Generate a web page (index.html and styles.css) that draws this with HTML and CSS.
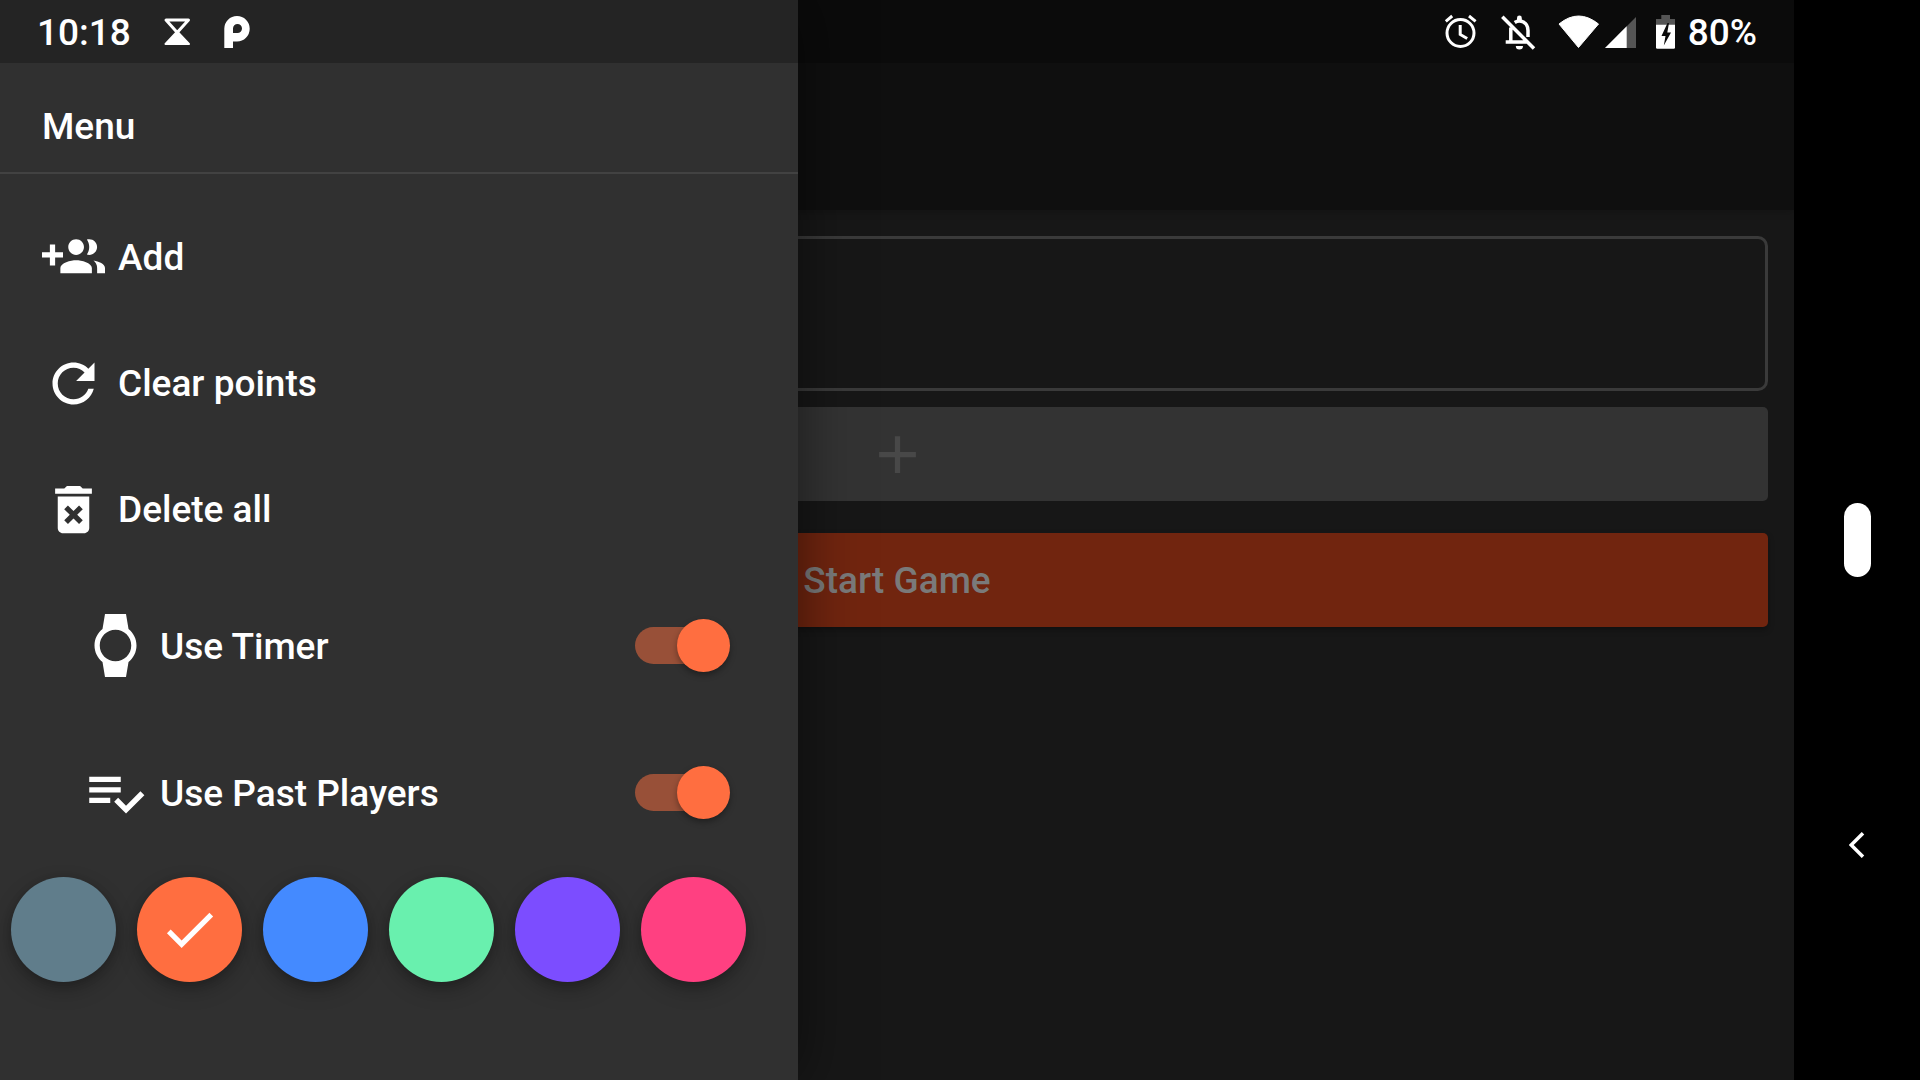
FILE: index.html
```html
<!DOCTYPE html>
<html lang="en">
<head>
<meta charset="utf-8">
<meta name="viewport" content="width=device-width, initial-scale=1">
<title>Menu</title>
<link rel="stylesheet" href="styles.css">
</head>
<body>
<div class="device">
  <div class="screen">
    <div class="game">
      <header class="app-bar"></header>
      <main class="setup">
        <section class="players" aria-label="Players"></section>
        <button class="bar-button add-player" type="button" aria-label="Add player">
          <svg class="icon" viewBox="0 0 24 24"><path d="M19 13h-6v6h-2v-6H5v-2h6V5h2v6h6v2z"/></svg>
        </button>
        <button class="bar-button start-game" type="button"><span class="label">Start Game</span></button>
      </main>
    </div>

    <aside class="drawer">
      <h1 class="drawer-title">Menu</h1>
      <nav class="actions">
        <button class="action" type="button">
          <svg class="icon" viewBox="0 0 24 24"><path d="M8 10H5V7H3v3H0v2h3v3h2v-3h3v-2zm10 1c1.66 0 2.99-1.34 2.99-3S19.66 5 18 5c-.32 0-.63.05-.91.14.57.81.9 1.79.9 2.86s-.34 2.04-.9 2.86c.28.09.59.14.91.14zm-5 0c1.66 0 2.99-1.34 2.99-3S14.66 5 13 5c-1.66 0-3 1.34-3 3s1.34 3 3 3zm6.62 2.16c.83.73 1.38 1.66 1.38 2.84v2h3v-2c0-1.54-2.37-2.49-4.38-2.84zM13 13c-2 0-6 1-6 3v2h12v-2c0-2-4-3-6-3z"/></svg>
          <span class="label">Add</span>
        </button>
        <button class="action" type="button">
          <svg class="icon" viewBox="0 0 24 24"><path d="M17.65 6.35C16.2 4.9 14.21 4 12 4c-4.42 0-7.99 3.58-7.99 8s3.57 8 7.99 8c3.73 0 6.84-2.55 7.73-6h-2.08c-.82 2.33-3.04 4-5.65 4-3.31 0-6-2.69-6-6s2.69-6 6-6c1.66 0 3.14.69 4.22 1.78L13 11h7V4l-2.35 2.35z"/></svg>
          <span class="label">Clear points</span>
        </button>
        <button class="action" type="button">
          <svg class="icon" viewBox="0 0 24 24"><path d="M6 19c0 1.1.9 2 2 2h8c1.1 0 2-.9 2-2V7H6v12zm2.46-7.12l1.41-1.41L12 12.59l2.12-2.12 1.41 1.41L13.41 14l2.12 2.12-1.41 1.41L12 15.41l-2.12 2.12-1.41-1.41L10.59 14l-2.13-2.12zM15.5 4l-1-1h-5l-1 1H5v2h14V4z"/></svg>
          <span class="label">Delete all</span>
        </button>
      </nav>
      <label class="setting">
        <svg class="icon" viewBox="0 0 24 24"><path d="M20 12c0-2.54-1.19-4.81-3.04-6.27L16 0H8l-.95 5.73C5.19 7.19 4 9.45 4 12s1.19 4.81 3.05 6.27L8 24h8l.96-5.73C18.81 16.81 20 14.54 20 12zM6 12c0-3.31 2.69-6 6-6s6 2.69 6 6-2.69 6-6 6-6-2.69-6-6z"/></svg>
        <span class="label">Use Timer</span>
        <input class="switch" type="checkbox" checked>
      </label>
      <label class="setting">
        <svg class="icon" viewBox="0 0 24 24"><path d="M14 10H2v2h12v-2zm0-4H2v2h12V6zM2 16h8v-2H2v2zm19.5-4.5L23 13l-6.99 7-4.51-4.5L13 14l3.01 3 5.49-5.5z"/></svg>
        <span class="label">Use Past Players</span>
        <input class="switch" type="checkbox" checked>
      </label>
      <div class="swatches" role="radiogroup" aria-label="Theme color">
        <label class="swatch grey"><input type="radio" name="theme" aria-label="Grey"></label>
        <label class="swatch orange"><input type="radio" name="theme" aria-label="Orange" checked>
          <svg class="icon" viewBox="0 0 24 24"><path d="M9 16.17L4.83 12l-1.42 1.41L9 19 21 7l-1.41-1.41z"/></svg>
        </label>
        <label class="swatch blue"><input type="radio" name="theme" aria-label="Blue"></label>
        <label class="swatch green"><input type="radio" name="theme" aria-label="Green"></label>
        <label class="swatch purple"><input type="radio" name="theme" aria-label="Purple"></label>
        <label class="swatch pink"><input type="radio" name="theme" aria-label="Pink"></label>
      </div>
    </aside>

    <div class="status-bar">
      <div class="notifications">
        <time class="label">10:18</time>
        <svg width="28" height="32" viewBox="0 0 28 32"><path d="M3 4H25.500L14.200 16.500Z" fill="none" stroke="#fff" stroke-width="3" stroke-linejoin="round"/><path d="M14.200 15.500 26 28H2.500Z" fill="#fff" stroke="#fff" stroke-width="2" stroke-linejoin="round"/></svg>
        <svg width="28" height="36" viewBox="0 0 28 36"><path fill="#fff" fill-rule="evenodd" d="M1.300 34V14.700a12.700 12.700 0 1 1 12.700 12.700H10V34ZM10 19h4.500a4.500 4.500 0 1 0-4.500-4.500Z"/></svg>
      </div>
      <div class="system">
        <svg width="34" height="36" viewBox="0 0 34 36" fill="none" stroke="#fff" stroke-width="3"><circle cx="16.500" cy="19" r="13.500"/><path d="M16.200 11v9.500l7 4M1.800 7.300 8.200 2M25 2l6.600 5.300"/></svg>
        <svg class="muted" width="36" height="36" viewBox="0 0 36 36" fill="none" stroke="#fff" stroke-width="3.500"><path d="M2.300 2.700 34 34.500M5.700 28H26.500M10.800 13.500V28M14.700 8.500C20 5 28 8 28 16.500V23"/><path d="M15.800 32h7.200a3.600 3.600 0 0 1-7.200 0ZM17 7V4a2.400 2.400 0 0 1 4.800 0v3Z" fill="#fff" stroke="none"/></svg>
        <svg class="wifi" width="45" height="36" viewBox="0 0 45 36"><path d="M3 10Q22.500-6 42.500 10L22.500 33.500Z" fill="#fff" stroke="#fff" stroke-linejoin="round"/></svg>
        <svg class="signal" width="34" height="34" viewBox="0 0 34 34"><path d="M1 33 32 2V33Z" fill="#555"/><path d="M1 33 22.700 11.300V33Z" fill="#fff"/></svg>
        <svg class="battery" width="24" height="38" viewBox="0 0 24 38"><path d="M7.300 2H16V6H21V12H2V6H7.300Z" fill="#555"/><path d="M2 11.700H21V34.500q0 1.300-1.300 1.300H3.300Q2 35.800 2 34.500Z" fill="#fff"/><path d="M13.500 10 7.500 23H11.500L9.800 32.500 17 19.500H13.300L15 10Z" fill="#0b0b0b"/></svg>
        <span class="label">80%</span>
      </div>
    </div>
  </div>

  <nav class="system-nav" aria-label="System">
    <button class="home" type="button" aria-label="Home"></button>
    <button class="back" type="button" aria-label="Back">
      <svg width="16" height="26" viewBox="0 0 16 26"><path d="M14 1.200 2.200 13 14 24.800" fill="none" stroke="#fff" stroke-width="3.500"/></svg>
    </button>
  </nav>
</div>
</body>
</html>
```
FILE: styles.css
```css
* {
  box-sizing: border-box;
}

body {
  margin: 0;
  background: #000;
  color: #fff;
  font: 500 37px/42px Roboto, sans-serif;
}

button {
  margin: 0;
  padding: 0;
  border: 0;
  background: none;
  color: inherit;
  font: inherit;
}

svg {
  display: block;
  flex: none;
}

.icon {
  width: 63px;
  height: 63px;
  fill: currentColor;
}

.label {
  padding-top: 2px;
}

.device {
  display: grid;
  grid-template-columns: 1fr 126px;
  min-height: 100vh;
}

/* The game, the drawer and the status bar are stacked in one cell */
.screen {
  display: grid;
  overflow: hidden;
}

.game,
.drawer,
.status-bar {
  grid-area: 1 / 1;
}

.game {
  background: #171717;
}

.app-bar {
  height: 210px;
  background: #0f0f0f;
  box-shadow: 0 2px 8px rgba(0, 0, 0, .2);
}

.setup {
  display: flex;
  flex-direction: column;
  padding: 26px;
}

.players {
  height: 155px;
  margin-bottom: 16px;
  border: 3px solid #3a3a3a;
  border-radius: 10px;
}

.bar-button {
  display: flex;
  align-items: center;
  justify-content: center;
  height: 94px;
  border-radius: 5px;
}

.add-player {
  margin-bottom: 32px;
  background: #333;
  color: #484848;
}

.start-game {
  background: #71250f;
  color: #7a7a7a;
  box-shadow: 0 3px 6px rgba(0, 0, 0, .3);
}

.drawer {
  display: flex;
  flex-direction: column;
  width: 798px;
  max-width: 100%;
  padding-top: 63px;
  background: #303030;
  box-shadow: 0 0 56px rgba(0, 0, 0, .5);
}

.drawer-title {
  margin: 0;
  padding: 43px 42px 24px;
  border-bottom: 2px solid #424242;
  font: inherit;
}

.actions {
  display: flex;
  flex-direction: column;
  padding-top: 20px;
}

.action {
  display: flex;
  align-items: center;
  gap: 13px;
  height: 126px;
  padding: 0 42px;
}

.setting {
  display: flex;
  align-items: center;
  gap: 13px;
  height: 147px;
  padding: 0 68px 0 84px;
}

.switch {
  display: grid;
  align-items: center;
  width: 95px;
  height: 53px;
  margin: 0 0 0 auto;
  appearance: none;
}

.switch::before,
.switch::after {
  content: "";
  grid-area: 1 / 1;
}

.switch::before {
  width: 88px;
  height: 37px;
  border-radius: 19px;
  background: #985038;
}

.switch::after {
  justify-self: end;
  width: 53px;
  height: 53px;
  border-radius: 50%;
  background: #ff6e40;
  box-shadow: 0 3px 6px rgba(0, 0, 0, .35);
}

.swatches {
  display: flex;
  gap: 21px;
  padding: 11px;
}

.swatch {
  display: grid;
  place-items: center;
  width: 105px;
  height: 105px;
  border-radius: 50%;
  box-shadow: 0 8px 20px rgba(0, 0, 0, .25), 0 2px 8px rgba(0, 0, 0, .15);
}

.swatch input,
.swatch .icon {
  grid-area: 1 / 1;
}

.swatch input {
  width: 100%;
  height: 100%;
  margin: 0;
  appearance: none;
}

.grey { background: #607d8b; }
.orange { background: #ff6e40; }
.blue { background: #448aff; }
.green { background: #69f0ae; }
.purple { background: #7c4dff; }
.pink { background: #ff4081; }

.status-bar {
  display: flex;
  align-items: center;
  justify-content: space-between;
  height: 63px;
  padding: 0 37px;
  background: rgba(0, 0, 0, .25);
}

.notifications,
.system {
  display: flex;
  align-items: center;
}

.notifications {
  gap: 32px;
}

.muted {
  margin-left: 22px;
}

.wifi {
  margin-left: 20px;
}

.signal {
  margin-left: 3px;
}

.battery {
  margin: 0 10px 0 16px;
}

.system-nav {
  display: grid;
  grid-template-rows: 1fr auto 1fr;
  justify-items: center;
}

.home {
  grid-row: 2;
  width: 27px;
  height: 74px;
  border-radius: 14px;
  background: #fff;
}

.back {
  grid-row: 3;
  align-self: start;
  width: 126px;
  height: 126px;
  margin-top: 205px;
}

.back svg {
  margin: 0 auto;
}
```
